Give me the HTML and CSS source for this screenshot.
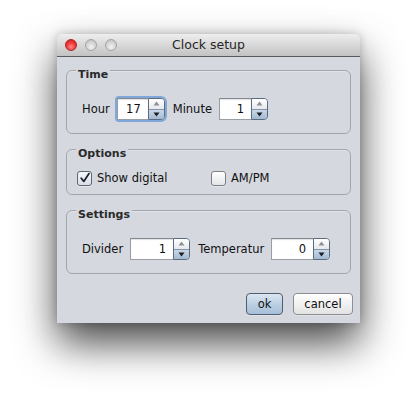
FILE: index.html
```html
<!DOCTYPE html>
<html>
<head>
<meta charset="utf-8">
<link rel="stylesheet" href="styles.css">
</head>
<body>
<div class="screen">
  <div class="window">
    <div class="titlebar">
      <div class="lights">
        <span class="light red"></span>
        <span class="light"></span>
        <span class="light"></span>
      </div>
      <div class="title">Clock setup</div>
      <div></div>
    </div>
    <div class="content">
      <section class="group group-time">
        <div class="group-label">Time</div>
        <div class="row">
          <span class="lbl">Hour</span>
          <div class="spinner focused">
            <div class="field f31">17</div>
            <div class="arrows">
              <div class="arr up"><svg width="7" height="5" viewBox="0 0 7 5"><path d="M3.5 0.5 L6.5 4.5 L0.5 4.5 Z" fill="#8d9096"/></svg></div>
              <div class="arr down"><svg width="7" height="5" viewBox="0 0 7 5"><path d="M0.5 0.5 L6.5 0.5 L3.5 4.5 Z" fill="#1c1f24"/></svg></div>
            </div>
          </div>
          <span class="lbl">Minute</span>
          <div class="spinner">
            <div class="field f32">1</div>
            <div class="arrows">
              <div class="arr up"><svg width="7" height="5" viewBox="0 0 7 5"><path d="M3.5 0.5 L6.5 4.5 L0.5 4.5 Z" fill="#8d9096"/></svg></div>
              <div class="arr down"><svg width="7" height="5" viewBox="0 0 7 5"><path d="M0.5 0.5 L6.5 0.5 L3.5 4.5 Z" fill="#1c1f24"/></svg></div>
            </div>
          </div>
        </div>
      </section>

      <section class="group group-options">
        <div class="group-label">Options</div>
        <div class="checks">
          <label class="check">
            <span class="box checked"><svg width="12" height="12" viewBox="0 0 12 12"><path d="M2.2 6.2 L4.8 9.4 L10 1.6" fill="none" stroke="#1d2633" stroke-width="1.8" stroke-linecap="round" stroke-linejoin="round"/></svg></span>
            <span>Show digital</span>
          </label>
          <label class="check">
            <span class="box"></span>
            <span>AM/PM</span>
          </label>
        </div>
      </section>

      <section class="group group-settings">
        <div class="group-label">Settings</div>
        <div class="row">
          <span class="lbl">Divider</span>
          <div class="spinner">
            <div class="field f43">1</div>
            <div class="arrows">
              <div class="arr up"><svg width="7" height="5" viewBox="0 0 7 5"><path d="M3.5 0.5 L6.5 4.5 L0.5 4.5 Z" fill="#8d9096"/></svg></div>
              <div class="arr down"><svg width="7" height="5" viewBox="0 0 7 5"><path d="M0.5 0.5 L6.5 0.5 L3.5 4.5 Z" fill="#1c1f24"/></svg></div>
            </div>
          </div>
          <span class="lbl lbl-wide">Temperatur</span>
          <div class="spinner">
            <div class="field f42">0</div>
            <div class="arrows">
              <div class="arr up"><svg width="7" height="5" viewBox="0 0 7 5"><path d="M3.5 0.5 L6.5 4.5 L0.5 4.5 Z" fill="#8d9096"/></svg></div>
              <div class="arr down"><svg width="7" height="5" viewBox="0 0 7 5"><path d="M0.5 0.5 L6.5 0.5 L3.5 4.5 Z" fill="#1c1f24"/></svg></div>
            </div>
          </div>
        </div>
      </section>

      <div class="buttons">
        <button class="btn btn-default">ok</button>
        <button class="btn">cancel</button>
      </div>
    </div>
  </div>
</div>
</body>
</html>
```

FILE: styles.css
```css
html, body {
  margin: 0;
  padding: 0;
  background: #ffffff;
}

body {
  font-family: "DejaVu Sans", "Liberation Sans", sans-serif;
  font-size: 11.5px;
  color: #111;
  width: 417px;
  height: 402px;
  overflow: hidden;
}

.screen {
  padding: 34px 0 0 57px;
}

.window {
  width: 303px;
  height: 289px;
  border-radius: 5px 5px 0 0;
  background: #d5d8df;
  box-shadow: 0 20px 40px rgba(0, 0, 0, 0.72), 0 0 10px rgba(0, 0, 0, 0.2);
  display: flex;
  flex-direction: column;
}

.titlebar {
  height: 22px;
  border-bottom: 1px solid #5b5b5b;
  border-radius: 5px 5px 0 0;
  background: linear-gradient(#eeeeee, #d6d6d6 55%, #c2c2c2);
  display: grid;
  grid-template-columns: 1fr auto 1fr;
  align-items: center;
}

.lights {
  display: flex;
  gap: 8px;
  padding-left: 8px;
}

.light {
  width: 12px;
  height: 12px;
  border-radius: 50%;
  box-sizing: border-box;
  border: 1px solid #a4a4a4;
  background: radial-gradient(circle at 50% 70%, #f2f2f2 0, #d4d4d4 55%, #b9b9b9 100%);
}

.light.red {
  border-color: #a8262a;
  background: radial-gradient(circle at 50% 70%, #ff8a8a 0, #f33a3a 50%, #c41d20 100%);
}

.title {
  font-size: 12.5px;
  color: #262626;
  padding-bottom: 1px;
}

.content {
  flex: 1;
  padding: 13px 0 8px 9px;
  display: flex;
  flex-direction: column;
}

.group {
  position: relative;
  width: 285px;
  box-sizing: border-box;
  border: 1px solid #a3a6ac;
  border-radius: 6px;
  box-shadow: inset 0 1px 0 rgba(255, 255, 255, 0.25);
}

.group + .group {
  margin-top: 15px;
}

.group-label {
  position: absolute;
  top: -3px;
  left: 9px;
  padding: 0 2px;
  background: #d5d8df;
  font-size: 11px;
  font-weight: bold;
  color: #2a2a2a;
  line-height: 13px;
  border-radius: 0 0 3px 3px;
}

.group-time,
.group-settings {
  height: 64px;
  padding: 27px 0 0 15px;
}

.group-options {
  height: 46px;
  padding: 20px 0 0 10px;
}

.row {
  display: flex;
  align-items: center;
  height: 22px;
}

.lbl {
  margin-right: 7px;
}

.spinner {
  display: flex;
  height: 22px;
  margin-right: 8px;
  border-radius: 0 4px 4px 0;
}

.spinner.focused {
  box-shadow: 0 0 0 2px rgba(100, 150, 215, 0.75);
  border-radius: 2px 4px 4px 2px;
}

.field {
  box-sizing: border-box;
  height: 22px;
  background: #fff;
  border: 1px solid #9a9da3;
  border-top-color: #85888e;
  border-right: none;
  text-align: right;
  padding-right: 7px;
  line-height: 20px;
  font-size: 11.5px;
  color: #111;
  box-shadow: inset 0 1px 1px rgba(0, 0, 0, 0.12);
}

.f31 { width: 31px; }
.f32 { width: 32px; }
.f42 { width: 42px; }
.f43 { width: 43px; }

.arrows {
  width: 17px;
  height: 22px;
  box-sizing: border-box;
  border: 1px solid #5b6b80;
  border-radius: 0 4px 4px 0;
  overflow: hidden;
  display: flex;
  flex-direction: column;
}

.arr {
  flex: 1;
  display: flex;
  align-items: center;
  justify-content: center;
}

.arr.up {
  background: linear-gradient(#ffffff, #e6e8ec);
  border-bottom: 1px solid #8594a8;
}

.arr.down {
  background: linear-gradient(#cad8e8, #a3b9d2);
}

.checks {
  display: grid;
  grid-template-columns: 134px 134px;
  height: 16px;
  align-items: center;
}

.check {
  display: flex;
  align-items: center;
  gap: 5px;
}

.box {
  width: 15px;
  height: 15px;
  box-sizing: border-box;
  border: 1px solid #7d7f84;
  border-radius: 3px;
  background: linear-gradient(#ffffff, #e4e5e8);
  display: flex;
  align-items: center;
  justify-content: center;
  box-shadow: 0 1px 0 rgba(255, 255, 255, 0.4);
}

.box.checked {
  border-color: #5c6676;
  background: linear-gradient(#f6f8fb, #d9dee6);
}

.buttons {
  margin-top: 19px;
  display: flex;
  justify-content: flex-end;
  gap: 10px;
  padding-right: 7px;
}

.btn {
  height: 22px;
  box-sizing: border-box;
  font-family: "DejaVu Sans", "Liberation Sans", sans-serif;
  font-size: 11.5px;
  color: #111;
  border: 1px solid #8c8d91;
  border-radius: 4px;
  background: linear-gradient(#ffffff, #f1f1f1 50%, #e2e2e2);
  padding: 0;
  width: 60px;
  box-shadow: 0 1px 0 rgba(255, 255, 255, 0.3);
}

.btn-default {
  width: 37px;
  border-color: #4f5d70;
  background: linear-gradient(#dbe6f1, #bcd0e3 50%, #a7bfd8);
}
```
